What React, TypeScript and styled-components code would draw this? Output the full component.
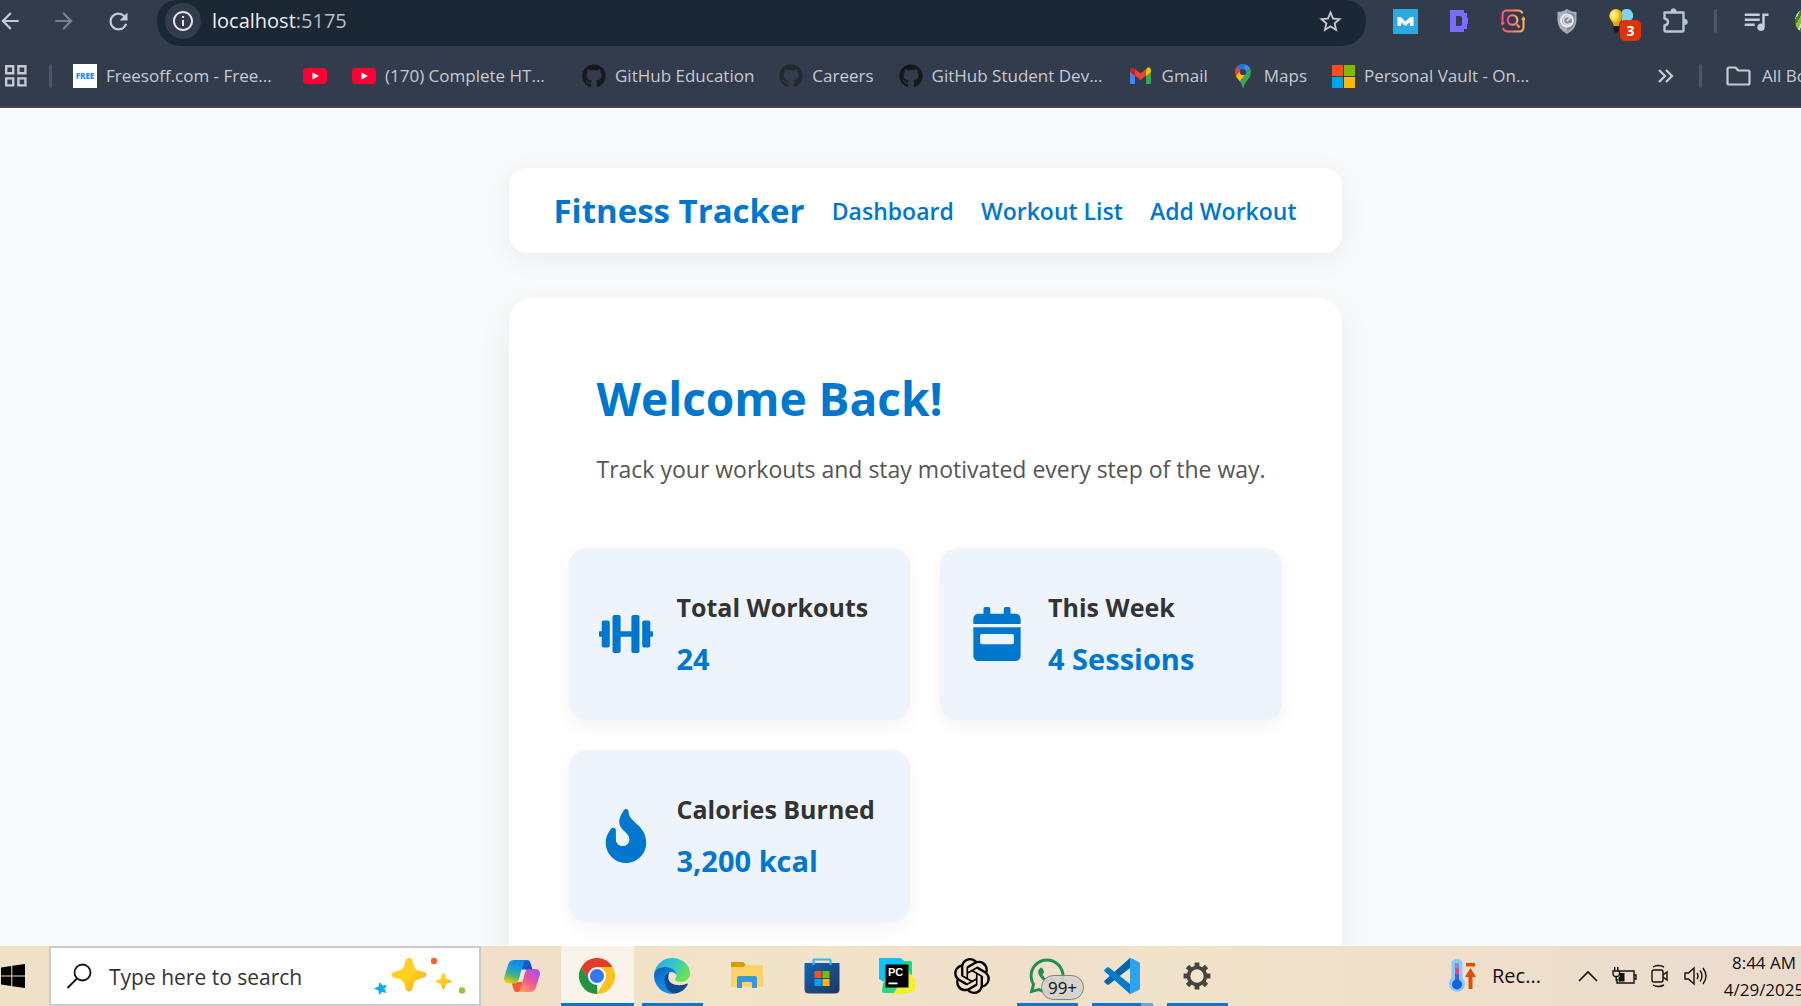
import React from 'react';
import styled, { createGlobalStyle, css } from 'styled-components';
import { FaDumbbell, FaCalendarWeek, FaFire, FaGithub, FaWhatsapp } from 'react-icons/fa';
import { MdArrowBack, MdArrowForward, MdRefresh, MdInfoOutline, MdStarBorder, MdQueueMusic } from 'react-icons/md';
import { SiOpenai } from 'react-icons/si';

const GlobalStyle = createGlobalStyle`
  *, *::before, *::after { box-sizing: border-box; }
  body {
    margin: 0;
    overflow: hidden;
    font-family: 'Open Sans', 'Noto Sans', sans-serif;
  }
  button, input { font: inherit; color: inherit; }
  svg { display: block; flex: none; }
`;

const Screen = styled.div`
  display: flex;
  flex-direction: column;
  height: 100vh;
  overflow: hidden;
`;

/* ---------- browser chrome ---------- */

const BrowserChrome = styled.header`
  flex: none;
  background: #323c4c;
  color: #c7cad0;
  border-bottom: 2px solid #42474f;
  overflow: hidden;
`;

const AddressRow = styled.div`
  display: flex;
  height: 46px;
  padding-bottom: 4px;
  align-items: center;
`;

const IconButton = styled.button<{ $dim?: boolean }>`
  display: grid;
  place-items: center;
  flex: none;
  width: 54px;
  height: 36px;
  padding: 0;
  border: 0;
  background: none;
  color: ${(p) => (p.$dim ? '#7b818c' : '#c2cbdf')};
`;

const HistoryButtons = styled.nav`
  display: flex;
  flex: none;
  margin: 0 12px 0 -17px;
`;

const AddressBar = styled.div`
  display: flex;
  align-self: flex-start;
  align-items: center;
  flex: 1;
  gap: 11px;
  min-width: 0;
  height: 46px;
  padding: 0 9px 4px 8px;
  border-radius: 20px 20px 24px 24px;
  background: #1c2735;
`;

const SiteInfo = styled.button`
  display: grid;
  place-items: center;
  flex: none;
  width: 36px;
  height: 36px;
  padding: 0;
  border: 0;
  border-radius: 50%;
  background: #323c4c;
  color: #e3e5e9;
`;

const Url = styled.div`
  flex: 1;
  color: #b9bec7;
  font-size: 20px;
  line-height: 28px;
  b { color: #eceef1; font-weight: 400; }
`;

const Separator = styled.span`
  flex: none;
  width: 3px;
  height: 24px;
  border-radius: 2px;
  background: #4c5667;
`;

const Extensions = styled.div`
  display: flex;
  flex: none;
  align-items: center;
  margin: 0 -30px 0 12px;
  ${Separator} { margin: 0 12px; }
`;

const BadgeAnchor = styled.span`
  position: relative;
  display: block;
`;

const CountBadge = styled.span`
  position: absolute;
  left: 11px;
  top: 11px;
  width: 21px;
  height: 21px;
  border-radius: 5px;
  background: #dc3405;
  color: #fff;
  font-size: 14px;
  font-weight: 700;
  line-height: 21px;
  text-align: center;
`;

const Avatar = styled.span`
  flex: none;
  width: 36px;
  height: 26px;
  margin-left: 12px;
  border-radius: 13px;
  background: repeating-linear-gradient(120deg, #8fbf3a 0 4px, #d8e39c 4px 6px, #4c7a25 6px 9px);
`;

const BookmarkRow = styled.nav`
  display: flex;
  align-items: center;
  height: 60px;
  gap: 21px;
  padding-left: 4px;
`;

const BookmarkList = styled.div`
  display: flex;
  flex: none;
  gap: 25px;
`;

const Bookmark = styled.a`
  display: flex;
  flex: none;
  align-items: center;
  gap: 9px;
  color: inherit;
  font-size: 17px;
  line-height: 24px;
  text-decoration: none;
  white-space: nowrap;
`;

const BookmarkLabel = styled.span<{ $full?: boolean }>`
  ${(p) => p.$full && css`width: 172px;`}
`;

const FreeIcon = styled.span`
  width: 24px;
  height: 24px;
  background: #fff;
  color: #1e90ff;
  font-size: 8px;
  font-weight: 800;
  line-height: 24px;
  text-align: center;
`;

const MoreGroup = styled.div`
  display: flex;
  align-items: center;
  gap: 6px;
  margin-left: auto;
`;

const AllBookmarks = styled.button`
  display: flex;
  align-items: center;
  gap: 11px;
  width: 75px;
  margin-left: 18px;
  padding: 0;
  overflow: hidden;
  border: 0;
  background: none;
  font-size: 17px;
  line-height: 24px;
  white-space: nowrap;
`;

/* ---------- page ---------- */

const Page = styled.main`
  display: flex;
  flex: 1;
  flex-direction: column;
  align-items: center;
  min-height: 0;
  padding: 60px 0 0 49px;
  overflow: hidden;
  background: #f7f9fb;
`;

const Column = styled.div`
  display: flex;
  flex: none;
  flex-direction: column;
  gap: 45px;
  width: 833px;
  max-width: 100%;
`;

const SiteNav = styled.nav`
  display: flex;
  align-items: center;
  justify-content: space-between;
  height: 85px;
  padding: 0 45px;
  border-radius: 18px;
  background: #fff;
  box-shadow: 0 6px 30px rgba(0, 0, 0, 0.05);
`;

const Brand = styled.h2`
  margin: 0;
  color: #0077cf;
  font-size: 33px;
  font-weight: 700;
  line-height: 48px;
`;

const NavLink = styled.a`
  color: #0077cf;
  font-size: 23px;
  font-weight: 600;
  line-height: 32px;
  text-decoration: none;
`;

const Panel = styled.section`
  padding: 60px;
  border-radius: 24px;
  background: #fff;
  box-shadow: 0 12px 36px rgba(0, 0, 0, 0.06);
`;

const Welcome = styled.div`
  padding: 8px 28px 60px;
`;

const Title = styled.h1`
  margin: 0 0 20px;
  color: #0077cf;
  font-size: 46px;
  font-weight: 700;
  line-height: 64px;
`;

const Lead = styled.p`
  margin: 0;
  color: #555;
  font-size: 23px;
  line-height: 38px;
  white-space: nowrap;
`;

const Stats = styled.div`
  display: grid;
  grid-template-columns: repeat(2, minmax(0, 1fr));
  gap: 30px;
`;

const StatCard = styled.article`
  display: flex;
  align-items: center;
  gap: 24px;
  height: 172px;
  padding: 0 30px;
  border-radius: 18px;
  background: #edf4fc;
  color: #0077cf;
  box-shadow: 0 6px 18px rgba(0, 0, 0, 0.05);
`;

const StatText = styled.div`
  padding-bottom: 2px;
  white-space: nowrap;
`;

const StatName = styled.h3`
  margin: 0 0 16px;
  color: #333;
  font-size: 25px;
  font-weight: 700;
  line-height: 36px;
`;

const StatValue = styled.p`
  margin: 0;
  font-size: 29px;
  font-weight: 700;
  line-height: 36px;
`;

/* ---------- taskbar ---------- */

const Taskbar = styled.footer`
  display: flex;
  flex: none;
  height: 60px;
  overflow: hidden;
  background: linear-gradient(90deg, #f1e0c8 0%, #f1dfc9 28%, #f2e4c8 40%, #f0dfca 56%, #f1e3ca 66%, #efdfca 80%, #eadbce 100%);
  color: #111;
`;

const StartButton = styled.button`
  display: grid;
  place-items: center start;
  width: 49px;
  padding: 0;
  border: 0;
  background: none;
`;

const SearchBox = styled.label`
  display: flex;
  align-items: center;
  width: 432px;
  padding: 0 13px 0 15px;
  border: 2px solid #c9cacd;
  background: #fff;
`;

const SearchInput = styled.input`
  flex: 1;
  min-width: 0;
  margin-left: 17px;
  padding: 2px 0 0;
  border: 0;
  outline: 0;
  background: none;
  font-size: 21px;
  line-height: 30px;
  &::placeholder { color: #333; opacity: 1; }
`;

const Apps = styled.div`
  display: flex;
  padding-left: 4px;
`;

const AppButton = styled.button<{ $active?: boolean; $running?: boolean; $windows?: boolean }>`
  position: relative;
  display: grid;
  place-items: center;
  width: 75px;
  padding: 0 1px 0 0;
  border: 1px solid transparent;
  border-width: 0 1px;
  background: ${(p) => (p.$active ? '#faf3e9' : 'none')};
  background-clip: padding-box;
  &::after {
    content: '';
    position: absolute;
    bottom: 0;
    left: ${(p) => (p.$active ? '0' : '6px')};
    right: ${(p) => (p.$active ? '0' : '6px')};
    height: 3px;
    background: ${(p) => (p.$active || p.$running ? '#0078d7' : 'none')};
    ${(p) => p.$windows && css`border-right: 12px solid #5fa8e0;`}
  }
`;

const UnreadBadge = styled.span`
  position: absolute;
  left: 30px;
  top: 29px;
  width: 43px;
  height: 25px;
  border: 1px solid #85837d;
  border-radius: 13px;
  background: rgba(213, 211, 206, 0.92);
  font-size: 17px;
  line-height: 23px;
  text-align: center;
`;

const Tray = styled.div`
  display: flex;
  align-items: center;
  margin-left: auto;
`;

const Weather = styled.button`
  display: flex;
  align-items: center;
  gap: 15px;
  width: 121px;
  padding: 0;
  border: 0;
  background: none;
  font-size: 20px;
  line-height: 28px;
`;

const TrayButton = styled.button`
  display: grid;
  place-items: center;
  width: 36px;
  height: 60px;
  padding: 0;
  border: 0;
  background: none;
`;

const Clock = styled.time`
  width: 84px;
  margin: 0 -5px 0 8px;
  font-size: 17px;
  line-height: 27px;
  text-align: center;
  white-space: nowrap;
`;

/* ---------- drawings ---------- */

const AppsGridIcon = () => (
  <svg width="24" height="24" viewBox="0 0 24 24" fill="none" stroke="#c7cad0" strokeWidth="2.4">
    <path d="M2.2 2.2h7v7h-7zM14.4 2.2h7v7h-7zM2.2 14.4h7v7h-7zM14.4 14.4h7v7h-7z" />
  </svg>
);

const YoutubeIcon = () => (
  <svg width="24" height="24" viewBox="0 0 24 24">
    <rect y="4" width="24" height="16" rx="4" fill="#ff0033" />
    <path d="M9.5 8.5v7l6.5-3.5z" fill="#fff" />
  </svg>
);

const GmailIcon = () => (
  <svg width="24" height="24" viewBox="0 0 24 24">
    <path d="M1 7v12q0 1 1.400 1H6V10z" fill="#4285f4" />
    <path d="M22 7v12q0 1-1.400 1H17V10z" fill="#34a853" />
    <path d="M17 6v6l5-4V6c0-2.200-2.400-3-4-2z" fill="#fbbc04" />
    <path d="M6 6v6L1 8V6c0-2.200 2.400-3 4-2z" fill="#c5221f" />
    <path d="M6 5l5.500 4.400L17 5v6.500L11.500 16 6 11.500z" fill="#ea4335" />
  </svg>
);

const MapsIcon = () => (
  <svg width="22" height="24" viewBox="0 0 22 24">
    <path d="M10 0C5 0 2 3.800 2 8c0 1.800.5 3.400 1.300 4.800L14.500 1.500A8 8 0 0 0 10 0z" fill="#ea4335" />
    <path d="M4 3l4 3.400L13.500.8C9.500-.9 6 .6 4 3z" fill="#1a73e8" />
    <path d="M13 .7L7.500 6.900l5.100 3.200L17.200 4.400C16.300 2.600 14.800 1.300 13 .7z" fill="#4285f4" />
    <path d="M3 12.200c1 2 2.600 3.500 3.900 5.200l6-7.300-5.200-3.500z" fill="#fbbc04" />
    <path d="M17.200 4.400L6.900 17.400C8.600 19.500 9 21.500 9.400 23c.2 1.200 1.200 1.200 1.400 0 1.200-6 7.200-8.500 7.200-15 0-1.300-.3-2.500-.8-3.600z" fill="#34a853" />
    <circle cx="10" cy="8" r="3.100" fill="#323c4c" />
  </svg>
);

const MicrosoftIcon = () => (
  <svg width="23" height="23" viewBox="0 0 23 23">
    <path d="M0 0h11v11H0z" fill="#f25022" />
    <path d="M12 0h11v11H12z" fill="#7fba00" />
    <path d="M0 12h11v11H0z" fill="#00a4ef" />
    <path d="M12 12h11v11H12z" fill="#ffb900" />
  </svg>
);

const ChevronsIcon = () => (
  <svg width="18" height="16" viewBox="0 0 18 16" fill="none" stroke="#c7cad0" strokeWidth="2.200">
    <path d="M2 2l6 6-6 6M9 2l6 6-6 6" />
  </svg>
);

const FolderIcon = () => (
  <svg width="25" height="20" viewBox="0 0 25 20" fill="none" stroke="#c7cad0" strokeWidth="2.200" strokeLinejoin="round">
    <path d="M1.500 3q0-1.500 1.500-1.500h6.500l2.800 3H22q1.500 0 1.500 1.500v11q0 1.500-1.500 1.500H3Q1.500 18.500 1.500 17z" />
  </svg>
);

const MIcon = () => (
  <svg width="25" height="25" viewBox="0 0 25 25">
    <path d="M0 0h25v25H0z" fill="#29abe2" />
    <path d="M4.500 17V8h3.200l4.800 4.500L17.300 8h3.200v9h-3.600v-3.800l-4.400 3.900-4.400-3.900V17z" fill="#fff" />
  </svg>
);

const DIcon = () => (
  <svg width="20" height="24" viewBox="0 0 20 24">
    <path d="M1 1h14v3h3v5h1v6h-1v5h-3v3H1z" fill="#7b6cff" />
    <path d="M7 7h4q2 0 2 2v6q0 2-2 2H7z" fill="#323c4c" />
  </svg>
);

const SearchExtIcon = () => (
  <svg width="24" height="24" viewBox="0 0 24 24" fill="none" stroke="url(#ext)" strokeWidth="2.100">
    <defs>
      <linearGradient id="ext"><stop stopColor="#ff4c7d" /><stop offset="1" stopColor="#ffb457" /></linearGradient>
    </defs>
    <path d="M1.500 14V6q0-4.500 4.500-4.500h11q3.500 0 4.500 3M22.500 9v9q0 4.500-4.500 4.500H7q-4 0-5-3.500M0 13l1.500 2L3 13M21 11l1.500-2L24 11" />
    <circle cx="11.500" cy="11" r="4.800" />
    <path d="M15 14.500l3.500 4" />
  </svg>
);

const ShieldIcon = () => (
  <svg width="20" height="25" viewBox="0 0 20 25">
    <path d="M10 0q4 3 9.500 3v8q0 9-9.500 14Q.5 20 .5 11V3Q6 3 10 0z" fill="#a9b0bb" />
    <path d="M10 2q3.500 2.500 8 2.700V11q0 7-8 12z" fill="#858e9c" />
    <circle cx="10" cy="11.500" r="6" fill="#8993a3" stroke="#eef1f5" strokeWidth="1.800" />
    <path d="M13 8.500a4 4 0 1 0 .5 5.500M10 12l5-5" fill="none" stroke="#dfe4ea" strokeWidth="1.600" />
  </svg>
);

const BulbIcon = () => (
  <svg width="24" height="24" viewBox="0 0 24 24">
    <defs>
      <radialGradient id="bulb" cx=".35" cy=".35"><stop stopColor="#fffbd0" /><stop offset=".6" stopColor="#fbd833" /><stop offset="1" stopColor="#e0a40a" /></radialGradient>
    </defs>
    <path d="M17 0a6.500 6.500 0 0 1 4 12h-8V2q1.500-2 4-2z" fill="#7fd3f3" />
    <path d="M7 0a6.700 6.700 0 0 1 6.700 6.700C13.700 11 10 12 10 17H4.500C4.500 12 .3 11 .3 6.700A6.700 6.700 0 0 1 7 0z" fill="url(#bulb)" />
    <path d="M4.500 17H10v4l-1.500 2.500H6L4.500 21z" fill="#15171b" />
  </svg>
);

const PuzzleIcon = () => (
  <svg width="26" height="26" viewBox="0 0 26 26" fill="none" stroke="#b9c3d9" strokeWidth="2.400" strokeLinejoin="round">
    <path d="M2.500 4.500h19v18q0 1-1 1h-17q-1 0-1-1v-5q3.500-.5 3.500-3.500t-3.500-3.500z" />
    <path d="M8.800 3.500a2.700 2.700 0 0 1 5.400 0zM22.600 11.200a2.700 2.700 0 0 1 0 5.400z" fill="#b9c3d9" strokeWidth="1" />
  </svg>
);

const WindowsIcon = () => (
  <svg width="26" height="26" viewBox="0 0 26 26" fill="#000">
    <path d="M1 4.500L11.300 3v9.500H1zM12.300 2.800L25 1v11.500H12.300zM1 13.500h10.300V23L1 21.500zM12.300 13.500H25V25l-12.700-1.800z" />
  </svg>
);

const MagnifierIcon = () => (
  <svg width="26" height="26" viewBox="0 0 26 26" fill="none" stroke="#111" strokeWidth="1.800">
    <circle cx="16.500" cy="9.500" r="8" />
    <path d="M11 15.500L1.500 25" />
  </svg>
);

const SparklesArt = () => (
  <svg width="92" height="38" viewBox="0 0 92 38">
    <defs>
      <linearGradient id="spark" x2="1" y2="1"><stop stopColor="#ffc928" /><stop offset=".5" stopColor="#ffd21f" /><stop offset="1" stopColor="#f0a51c" /></linearGradient>
    </defs>
    <path d="M35 1c2.500 0 3.500 2 4.500 6.500 1 4 2.500 5.500 7 6.500 4.500 1.200 6 2 6 3.700s-1.500 2.600-6 3.800c-4.500 1.200-6 2.500-7 6.500-1 4.500-2 6.500-4.500 6.500s-3.500-2-4.500-6.500c-1-4-2.500-5.300-7-6.500-4.500-1.200-6-2.100-6-3.800s1.500-2.500 6-3.700c4.500-1 6-2.500 7-6.500C31.500 3 32.500 1 35 1z" fill="url(#spark)" />
    <path d="M69.500 16c1.800 0 1.700 4.500 3 5.700 1.200 1.100 5 1 5 2.600s-3.800 1.600-5 2.700c-1.300 1.200-1.200 5.500-3 5.500s-1.700-4.300-3-5.500c-1.200-1.100-5-1.100-5-2.700s3.800-1.500 5-2.600c1.300-1.200 1.200-5.700 3-5.700z" fill="url(#spark)" />
    <path d="M5.500 25l3 3.500 4.500-.5-2.500 4 2 4-4.500-1L5 38l-.5-4.500L0 31.500l4.500-2z" fill="#0cacf0" />
    <circle cx="60" cy="4" r="3.200" fill="#f4662a" />
    <circle cx="88" cy="33.500" r="3.200" fill="#8cc840" />
  </svg>
);

const CopilotIcon = () => (
  <svg width="36" height="36" viewBox="0 0 36 36">
    <defs>
      <linearGradient id="cpA" x1=".6" x2=".3" y2="1"><stop stopColor="#1583e6" /><stop offset=".4" stopColor="#1aa0d8" /><stop offset=".7" stopColor="#56b567" /><stop offset="1" stopColor="#f3cf12" /></linearGradient>
      <linearGradient id="cpB" x1=".8" x2=".2" y2="1"><stop stopColor="#a94df0" /><stop offset=".5" stopColor="#ee5594" /><stop offset="1" stopColor="#ffa35c" /></linearGradient>
      <linearGradient id="cpC" x2="1" y2="1"><stop stopColor="#1f6fe8" /><stop offset="1" stopColor="#0b3bb5" /></linearGradient>
    </defs>
    <path d="M18 2h5c2 0 3 1 3.700 3.500L28.500 12H21c-2 0-3 1-3.700 3z" fill="url(#cpC)" />
    <path d="M18 34h-5c-2 0-3-1-3.700-3.500L7.500 24H15c2 0 3-1 3.700-3z" fill="#f15a3a" />
    <path d="M10 2h13c-2 0-3 1-3.700 3.500l-4 15c-.8 3-2 5-5 5H5C1 25.500-.5 23 .3 19L4 7c1-3.500 3-5 6-5z" fill="url(#cpA)" />
    <path d="M26 34H13c2 0 3-1 3.700-3.500l4-15c.8-3 2-4.500 5-4.500H31c4 0 5.500 2.500 4.700 6.500L32 29c-1 3.500-3 5-6 5z" fill="url(#cpB)" />
    <path d="M17.500 11.500h5c-1 1-1.500 2.500-2 4L18.300 24h-5c1-.8 1.600-2 2-3.500z" fill="#f3e6cf" />
  </svg>
);

const ChromeIcon = () => (
  <svg width="36" height="36" viewBox="0 0 36 36">
    <path d="M2.400 9A18 18 0 0 1 33.600 9H18l-7.800 13.500z" fill="#e33b2e" />
    <path d="M2.400 9l7.800 13.500L18 27l.5 9A18 18 0 0 1 2.400 9z" fill="#229342" />
    <path d="M33.600 9A18 18 0 0 1 18 36l7.800-13.500L18 9z" fill="#fcc31e" />
    <circle cx="18" cy="18" r="9" fill="#fff" />
    <circle cx="18" cy="18" r="7.100" fill="#2f7bee" />
  </svg>
);

const EdgeIcon = () => (
  <svg width="36" height="36" viewBox="0 0 36 36">
    <defs>
      <linearGradient id="edA" x2="1" y2=".5"><stop stopColor="#2aa5ea" /><stop offset=".5" stopColor="#2fc4d6" /><stop offset="1" stopColor="#6ae252" /></linearGradient>
      <linearGradient id="edB" x2=".5" y2="1"><stop stopColor="#0e5aa8" /><stop offset=".5" stopColor="#0c7fe0" /><stop offset="1" stopColor="#1190e8" /></linearGradient>
    </defs>
    <path d="M.3 15C2 6 9.500 0 18 0c10 0 18 7 18 15 0 6-4.500 9-9 9-3.500 0-6-1-6-2.500 0-1 1.500-1.500 1.500-4.500 0-4-4-8-11-8C6 9 2 12 .3 15z" fill="url(#edA)" />
    <path d="M.3 15C2 11 6 9 11.500 9c7 0 11 4 11 8 0 0-2-3-5-3s-6 3-6 8c0 7 5 13.500 10 13.600C11 38 0 29 0 18q0-1.500.3-3z" fill="url(#edB)" />
    <path d="M15.500 14.500c-3 1-5 4-5 8 0 7 5 13 11 13.100 6-1 10.500-5 12.200-9 .3-1-.6-1.300-1.400-.9-6 3-18 1.500-18-6 0-2 .5-4 1.200-5.200z" fill="#114a8b" />
  </svg>
);

const ExplorerIcon = () => (
  <svg width="34" height="30" viewBox="0 0 34 30">
    <path d="M1 2q0-1 1-1h11l3 3-3 5H1z" fill="#dc9a05" />
    <path d="M1 6h12.500l2-2H32q1 0 1 1v20q0 1-1 1H2q-1 0-1-1z" fill="#fdd367" />
    <path d="M7 27V17q0-2 2-2h16q2 0 2 2v10h-5v-5q0-1-1-1h-8q-1 0-1 1v5z" fill="#3a96dd" />
  </svg>
);

const StoreIcon = () => (
  <svg width="36" height="36" viewBox="0 0 36 36">
    <defs>
      <linearGradient id="store" x2="1" y2="1"><stop stopColor="#0f66b8" /><stop offset="1" stopColor="#20345f" /></linearGradient>
    </defs>
    <path d="M.5 5h35v26q0 4.500-4.500 4.500H5Q.5 35.500.5 31z" fill="url(#store)" />
    <path d="M9.500 7V2.500q0-1 1-1h15q1 0 1 1V7" fill="none" stroke="#28bdf5" strokeWidth="2.200" />
    <path d="M10.500 13H17.500v7H10.500z" fill="#f25022" />
    <path d="M18.500 13H25.500v7H18.500z" fill="#7fba00" />
    <path d="M10.500 21H17.500v7H10.500z" fill="#00a4ef" />
    <path d="M18.500 21H25.500v7H18.500z" fill="#ffb900" />
  </svg>
);

const PyCharmMark = styled.span`
  position: relative;
  width: 36px;
  height: 36px;
`;

const PyCharmText = styled.span`
  position: absolute;
  left: 9px;
  top: 7px;
  color: #fff;
  font-family: 'Liberation Sans', sans-serif;
  font-size: 11px;
  font-weight: 700;
  line-height: 14px;
`;

const PyCharmIcon = () => (
  <PyCharmMark>
    <svg width="36" height="36" viewBox="0 0 36 36">
      <path d="M0 0h22l3 3h6q2 0 2 2v10H10l-5 9-5-3z" fill="#08c4f8" />
      <path d="M22 6l3-3h6q2 0 2 2v12H22z" fill="#18d68c" />
      <path d="M4 25l8-6 12 16H5q-2 0-2-2z" fill="#21d789" />
      <path d="M29 13l7 9v11l-12 3H14z" fill="#eef02a" />
      <path d="M6.500 6.500h23v23h-23z" fill="#000" />
      <path d="M9.500 24.500h9v1.800h-9z" fill="#fff" />
    </svg>
    <PyCharmText>PC</PyCharmText>
  </PyCharmMark>
);

const VsCodeIcon = () => (
  <svg width="36" height="36" viewBox="0 0 36 36">
    <path d="M26 0v10L5 26.500q-1 .7-2 0L.7 24.500q-1-1 0-2z" fill="#0065a9" />
    <path d="M26 36V26L5 9.500q-1-.7-2 0L.7 11.500q-1 1 0 2z" fill="#007acc" />
    <path d="M26.500 0L35 4q1 .5 1 1.700v24.600q0 1.200-1 1.700l-8.500 4q-1.500.3-2.500-.8 2 .8 2-1.700v-31q0-2.500-2-1.700 1-1.100 2.500-.8z" fill="#2ba3ef" />
  </svg>
);

const GearIcon = () => (
  <svg width="28" height="28" viewBox="0 0 28 28" fill="none" stroke="#474440">
    <circle cx="14" cy="14" r="8.500" strokeWidth="3.600" />
    <path
      d="M14 5V.6M14 23v4.400M5 14H.6M23 14h4.400M7.600 7.600L4.500 4.500M20.400 20.400l3.100 3.100M20.400 7.600l3.100-3.100M7.600 20.400l-3.100 3.100"
      strokeWidth="4.800"
    />
  </svg>
);

const ThermometerIcon = () => (
  <svg width="28" height="34" viewBox="0 0 28 34">
    <path d="M8 0q5.500 0 5.500 5.500V19a8 8 0 1 1-11 0V5.500Q2.500 0 8 0z" fill="#8ac8fb" />
    <path d="M6 4h4v8H6z" fill="#8293ad" />
    <path d="M6 9h4v12H6z" fill="#d94a86" />
    <path d="M6 15h4v8H6z" fill="#4b5fd0" />
    <circle cx="8" cy="25.500" r="5" fill="#1463dc" />
    <path d="M17 4h9v3.500h-9zM21.500 9L27 18h-3.500v12h-4V18H16z" fill="#de4e07" />
  </svg>
);

const CaretUpIcon = () => (
  <svg width="20" height="12" viewBox="0 0 20 12" fill="none" stroke="#111" strokeWidth="1.600">
    <path d="M1 11l9-9 9 9" />
  </svg>
);

const BatteryIcon = () => (
  <svg width="25" height="18" viewBox="0 0 25 18" fill="none" stroke="#111" strokeWidth="1.400">
    <path d="M8 4h14v12H5v-4M22 8h2v4h-2" />
    <path d="M8 6h4.500v8.500H6.500V11L8 9z" fill="#111" stroke="none" />
    <path d="M1 4h6.500v3q0 2-2 2.500H3Q1 9 1 7zM2.700 4V0M5.800 4V0M4.200 9.500V14" />
  </svg>
);

const CameraIcon = () => (
  <svg width="20" height="24" viewBox="0 0 20 24" fill="none" stroke="#111" strokeWidth="1.400">
    <rect x="2" y="6" width="11" height="12" rx="2" />
    <path d="M13 11l4-3v8l-4-3M3 3q5-3 11 0M3 21q5 3 11 0" />
  </svg>
);

const VolumeIcon = () => (
  <svg width="24" height="20" viewBox="0 0 24 20" fill="none" stroke="#111" strokeWidth="1.400">
    <path d="M1 7h3.500L10 2v16l-5.500-5H1zM13 7q2 3 0 6M16 4.500q4 5.500 0 11M19 2q6 8 0 16" />
  </svg>
);

/* ---------- screen ---------- */

const bookmarks: { icon: React.ReactNode; label?: string; full?: boolean }[] = [
  { icon: <FreeIcon>FREE</FreeIcon>, label: 'Freesoff.com - Free...', full: true },
  { icon: <YoutubeIcon /> },
  { icon: <YoutubeIcon />, label: '(170) Complete HT...', full: true },
  { icon: <FaGithub size={24} color="#16181c" />, label: 'GitHub Education' },
  { icon: <FaGithub size={24} color="#24292e" />, label: 'Careers' },
  { icon: <FaGithub size={24} color="#16181c" />, label: 'GitHub Student Dev...', full: true },
  { icon: <GmailIcon />, label: 'Gmail' },
  { icon: <MapsIcon />, label: 'Maps' },
  { icon: <MicrosoftIcon />, label: 'Personal Vault - On...', full: true },
];

const stats = [
  { icon: <FaDumbbell size={54} />, name: 'Total Workouts', value: '24' },
  { icon: <FaCalendarWeek size={54} />, name: 'This Week', value: '4 Sessions' },
  { icon: <FaFire size={54} />, name: 'Calories Burned', value: '3,200 kcal' },
];

export default function App() {
  return (
    <Screen>
      <GlobalStyle />
      <BrowserChrome>
        <AddressRow>
          <HistoryButtons aria-label="History">
            <IconButton aria-label="Back"><MdArrowBack size={26} /></IconButton>
            <IconButton aria-label="Forward" $dim><MdArrowForward size={26} /></IconButton>
            <IconButton aria-label="Reload"><MdRefresh size={27} /></IconButton>
          </HistoryButtons>
          <AddressBar>
            <SiteInfo aria-label="Site information"><MdInfoOutline size={24} /></SiteInfo>
            <Url><b>localhost</b>:5175</Url>
            <IconButton aria-label="Bookmark this page"><MdStarBorder size={27} color="#c7cad0" /></IconButton>
          </AddressBar>
          <Extensions>
            <IconButton aria-label="M extension"><MIcon /></IconButton>
            <IconButton aria-label="D extension"><DIcon /></IconButton>
            <IconButton aria-label="Image search"><SearchExtIcon /></IconButton>
            <IconButton aria-label="Shield"><ShieldIcon /></IconButton>
            <IconButton aria-label="Ideas">
              <BadgeAnchor><BulbIcon /><CountBadge>3</CountBadge></BadgeAnchor>
            </IconButton>
            <IconButton aria-label="Extensions"><PuzzleIcon /></IconButton>
            <Separator />
            <IconButton aria-label="Media"><MdQueueMusic size={30} /></IconButton>
            <Avatar />
          </Extensions>
        </AddressRow>
        <BookmarkRow aria-label="Bookmarks">
          <Bookmark href="#apps" aria-label="Apps"><AppsGridIcon /></Bookmark>
          <Separator />
          <BookmarkList>
            {bookmarks.map((b, i) => (
              <Bookmark key={i} href="#bookmark" aria-label={b.label ?? 'YouTube'}>
                {b.icon}
                {b.label && <BookmarkLabel $full={b.full}>{b.label}</BookmarkLabel>}
              </Bookmark>
            ))}
          </BookmarkList>
          <MoreGroup>
            <IconButton aria-label="More bookmarks"><ChevronsIcon /></IconButton>
            <Separator />
            <AllBookmarks><FolderIcon />All Bookmarks</AllBookmarks>
          </MoreGroup>
        </BookmarkRow>
      </BrowserChrome>

      <Page>
        <Column>
          <SiteNav>
            <Brand>Fitness Tracker</Brand>
            <NavLink href="#dashboard">Dashboard</NavLink>
            <NavLink href="#workouts">Workout List</NavLink>
            <NavLink href="#add">Add Workout</NavLink>
          </SiteNav>
          <Panel>
            <Welcome>
              <Title>Welcome Back!</Title>
              <Lead>Track your workouts and stay motivated every step of the way.</Lead>
            </Welcome>
            <Stats>
              {stats.map((s) => (
                <StatCard key={s.name}>
                  {s.icon}
                  <StatText>
                    <StatName>{s.name}</StatName>
                    <StatValue>{s.value}</StatValue>
                  </StatText>
                </StatCard>
              ))}
            </Stats>
          </Panel>
        </Column>
      </Page>

      <Taskbar>
        <StartButton aria-label="Start"><WindowsIcon /></StartButton>
        <SearchBox>
          <MagnifierIcon />
          <SearchInput type="text" aria-label="Search" placeholder="Type here to search" />
          <SparklesArt />
        </SearchBox>
        <Apps>
          <AppButton aria-label="Copilot"><CopilotIcon /></AppButton>
          <AppButton aria-label="Chrome" $active><ChromeIcon /></AppButton>
          <AppButton aria-label="Edge" $running><EdgeIcon /></AppButton>
          <AppButton aria-label="File Explorer"><ExplorerIcon /></AppButton>
          <AppButton aria-label="Store"><StoreIcon /></AppButton>
          <AppButton aria-label="PyCharm"><PyCharmIcon /></AppButton>
          <AppButton aria-label="ChatGPT"><SiOpenai size={36} color="#000" /></AppButton>
          <AppButton aria-label="WhatsApp" $running>
            <FaWhatsapp size={40} color="#1f8f57" />
            <UnreadBadge>99+</UnreadBadge>
          </AppButton>
          <AppButton aria-label="Visual Studio Code" $running $windows><VsCodeIcon /></AppButton>
          <AppButton aria-label="Settings" $running><GearIcon /></AppButton>
        </Apps>
        <Tray>
          <Weather><ThermometerIcon />Rec...</Weather>
          <TrayButton aria-label="Show hidden icons"><CaretUpIcon /></TrayButton>
          <TrayButton aria-label="Battery"><BatteryIcon /></TrayButton>
          <TrayButton aria-label="Camera"><CameraIcon /></TrayButton>
          <TrayButton aria-label="Volume"><VolumeIcon /></TrayButton>
          <Clock>8:44 AM<br />4/29/2025</Clock>
        </Tray>
      </Taskbar>
    </Screen>
  );
}
